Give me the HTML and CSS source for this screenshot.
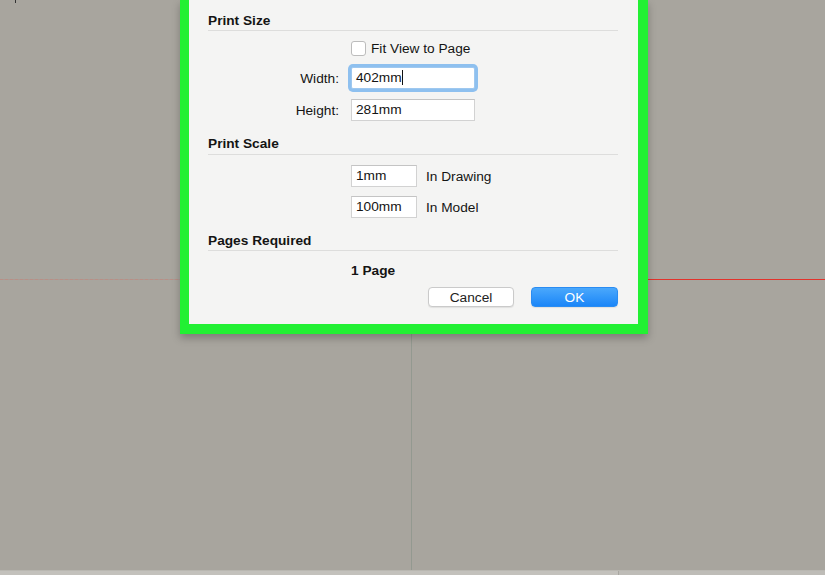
FILE: index.html
```html
<!DOCTYPE html>
<html lang="en">
<head>
    <meta charset="UTF-8">
    <meta name="viewport" content="width=device-width, initial-scale=1.0">
    <title>Print Setup</title>
    <link rel="stylesheet" href="styles.css">
</head>
<body>
    <!-- Drawing area behind the dialog -->
    <div class="canvas">
        <span class="cursor-tip"></span>
        <div class="axis-red"></div>
        <div class="axis-green"></div>

        <!-- Print dialog -->
        <div class="dialog">
            <div class="panel">
                <h3 class="group-title first">Print Size</h3>
                <div class="row">
                    <span class="label"></span>
                    <label class="check">
                        <span class="checkbox"></span>
                        Fit View to Page
                    </label>
                </div>
                <div class="row row-width">
                    <span class="label">Width:</span>
                    <span class="field wide focused">402mm<span class="caret"></span></span>
                </div>
                <div class="row row-height">
                    <span class="label">Height:</span>
                    <span class="field wide">281mm</span>
                </div>

                <h3 class="group-title scale">Print Scale</h3>
                <div class="row row-drawing">
                    <span class="label"></span>
                    <span class="field small">1mm</span>
                    <span class="unit">In Drawing</span>
                </div>
                <div class="row row-model">
                    <span class="label"></span>
                    <span class="field small">100mm</span>
                    <span class="unit">In Model</span>
                </div>

                <h3 class="group-title pages">Pages Required</h3>
                <div class="row row-count">
                    <span class="label"></span>
                    <strong>1 Page</strong>
                </div>

                <div class="buttons">
                    <button class="btn">Cancel</button>
                    <button class="btn primary">OK</button>
                </div>
            </div>
        </div>
    </div>

    <!-- Status strip -->
    <div class="status-bar">
        <div class="status-left"></div>
        <div class="status-right"></div>
    </div>
</body>
</html>
```

FILE: styles.css
```css
/* Base */
body {
    margin: 0;
    height: 575px;
    overflow: hidden;
    background-color: #a8a59e;
    font-family: "Liberation Sans", Arial, sans-serif;
    font-size: 13.7px;
    color: #141414;
}

/* Canvas */
.canvas {
    position: relative;
    height: 570px;
}

.cursor-tip {
    position: absolute;
    left: 15px;
    top: 0;
    width: 1px;
    height: 3px;
    background-color: #333;
}

.axis-red {
    position: absolute;
    left: 0;
    right: 0;
    top: 279px;
    height: 1px;
    background:
        linear-gradient(to right, transparent 180px, #e2332c 180px),
        repeating-linear-gradient(to right, #b98f86 0 3px, #aa9a93 3px 5px);
}

.axis-green {
    position: absolute;
    left: 411px;
    top: 333px;
    width: 1px;
    height: 237px;
    background-color: #939990;
}

/* Dialog */
.dialog {
    position: relative;
    z-index: 1;
    width: 449px;
    margin-left: 180px;
    border: solid #22f033;
    border-width: 0 10px 10px 9px;
    box-shadow: 0 4px 8px rgba(0, 0, 0, 0.25);
}

.panel {
    background-color: #f4f4f3;
    padding: 13px 20px 17px 19px;
}

.group-title {
    margin: 0;
    font-size: 13.7px;
    line-height: 16px;
    font-weight: bold;
    color: #141414;
    padding-bottom: 1px;
    border-bottom: 1px solid #dddddc;
}

.group-title.scale {
    margin-top: 15px;
    padding-bottom: 2px;
}

.group-title.pages {
    margin-top: 15px;
    padding-bottom: 1px;
}

/* Rows */
.row {
    display: flex;
    align-items: center;
    height: 22px;
    margin-top: 6px;
}

.row-width { margin-top: 8px; }
.row-height { margin-top: 10px; }
.row-drawing { margin-top: 10px; }
.row-model { margin-top: 9px; }
.row-count { margin-top: 4px; height: 30px; }

.label {
    width: 131px;
    margin-right: 12px;
    text-align: right;
}

.check {
    display: flex;
    align-items: center;
    gap: 5px;
}

.checkbox {
    width: 13px;
    height: 13px;
    background-color: #fff;
    border: 1px solid #bcbcbc;
    border-radius: 3px;
}

.field {
    box-sizing: border-box;
    height: 22px;
    line-height: 20px;
    padding-left: 4px;
    background-color: #fff;
    border: 1px solid #d2d2d2;
    border-top-color: #c4c4c4;
}

.field.wide { width: 124px; }
.field.small { width: 66px; }

.field.focused {
    border-color: #9fc8ef;
    border-radius: 2px;
    box-shadow: 0 0 0 3px #8ec0ef;
}

.caret {
    display: inline-block;
    width: 1px;
    height: 15px;
    vertical-align: -3px;
    background-color: #111;
}

.unit {
    margin-left: 9px;
}

/* Buttons */
.buttons {
    display: flex;
    justify-content: flex-end;
    gap: 17px;
    margin-top: 2px;
}

.btn {
    width: 86px;
    height: 20px;
    padding: 0;
    font-family: inherit;
    font-size: 13.7px;
    color: #222;
    background-color: #fff;
    border: 1px solid #cacaca;
    border-radius: 4px;
    box-shadow: 0 1px 1px rgba(0, 0, 0, 0.08);
}

.btn.primary {
    width: 87px;
    color: #fff;
    border-color: #2a8cf2;
    background: linear-gradient(#4aa8fc, #1b86f8);
}

/* Status strip */
.status-bar {
    display: flex;
    height: 5px;
    border-top: 1px solid #b9b7b1;
    background-color: #c3c1bc;
}

.status-left {
    width: 618px;
    border-right: 1px solid #a9a7a1;
}

.status-right {
    flex: 1;
    background-color: #bebcb7;
}
```
